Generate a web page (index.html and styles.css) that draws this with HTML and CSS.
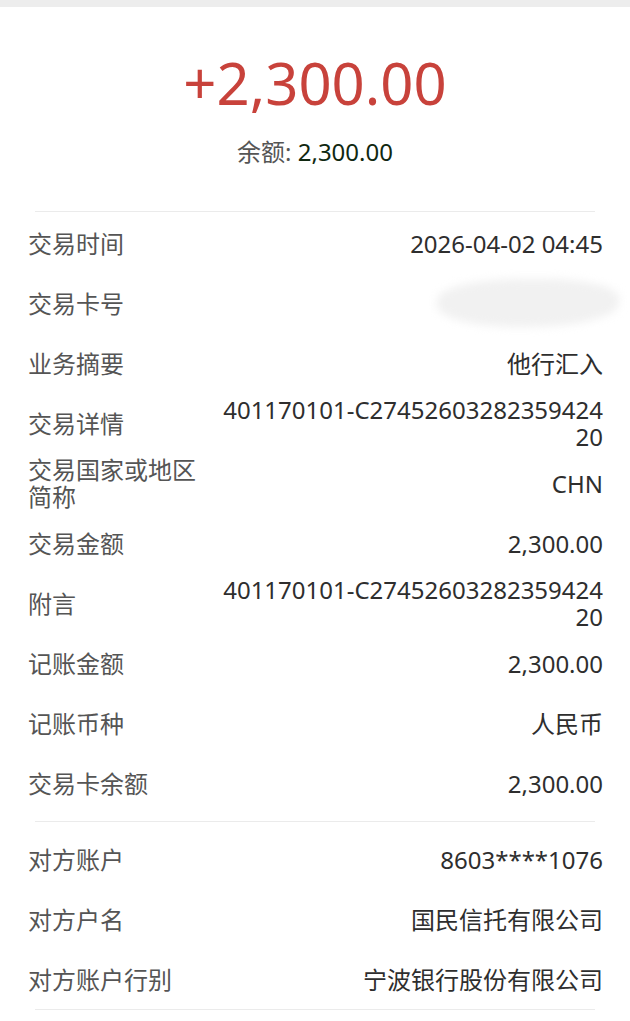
FILE: index.html
```html
<!DOCTYPE html>
<html lang="zh-CN">
<head>
    <meta charset="UTF-8">
    <title>交易详情</title>
    <link rel="stylesheet" href="styles.css">
</head>
<body>
<div class="topbar"></div>

<div class="summary">
    <div class="amount">+2,300.00</div>
    <div class="balance"><span class="balance_label">余额:</span> <span class="balance_num">2,300.00</span></div>
</div>
<div class="line"></div>

<div class="group group_first">
    <div class="row"><div class="label">交易时间</div><div class="value">2026-04-02 04:45</div></div>
    <div class="row"><div class="label">交易卡号</div><div class="value"><span class="mask"></span></div></div>
    <div class="row"><div class="label">业务摘要</div><div class="value">他行汇入</div></div>
    <div class="row"><div class="label">交易详情</div><div class="value">401170101-C2745260328235942420</div></div>
    <div class="row"><div class="label">交易国家或地区简称</div><div class="value">CHN</div></div>
    <div class="row"><div class="label">交易金额</div><div class="value">2,300.00</div></div>
    <div class="row"><div class="label">附言</div><div class="value">401170101-C2745260328235942420</div></div>
    <div class="row"><div class="label">记账金额</div><div class="value">2,300.00</div></div>
    <div class="row"><div class="label">记账币种</div><div class="value">人民币</div></div>
    <div class="row"><div class="label">交易卡余额</div><div class="value">2,300.00</div></div>
</div>
<div class="line"></div>

<div class="group group_second">
    <div class="row"><div class="label">对方账户</div><div class="value">8603****1076</div></div>
    <div class="row"><div class="label">对方户名</div><div class="value">国民信托有限公司</div></div>
    <div class="row"><div class="label">对方账户行别</div><div class="value">宁波银行股份有限公司</div></div>
</div>
<div class="line"></div>
</body>
</html>
```

FILE: styles.css
```css
*{margin: 0;padding: 0;box-sizing: border-box;}
body{
    background-color: #fff;
    font-family: "Noto Sans", "Noto Sans CJK SC", sans-serif;
    overflow: hidden;
}
.topbar{
    height: 7px;
    background-color: #ededed;
}
/*金额*/
.summary{
    padding: 41px 0 44px;
    text-align: center;
}
.amount{
    font-size: 58px;
    line-height: 70px;
    color: #c8423b;
}
.balance{
    margin-top: 19px;
    font-size: 24px;
    line-height: 30px;
}
.balance_label{
    color: #555;
}
.balance_num{
    color: #102810;
}
.line{
    height: 1px;
    margin: 0 35px;
    background-color: #ebebeb;
}
/*明细*/
.group_first{
    padding: 1px 0 8px;
}
.group_second{
    padding: 7px 0 0;
}
.row{
    display: flex;
    align-items: center;
    min-height: 60px;
    padding: 0 27px 0 28px;
    font-size: 24px;
    line-height: 27px;
}
.label{
    flex: 0 0 189px;
    color: #555;
}
.value{
    flex: 1;
    min-width: 0;
    text-align: right;
    word-break: break-all;
    color: #2e2e2e;
}
/*卡号遮挡*/
.mask{
    display: inline-block;
    width: 182px;
    height: 48px;
    margin-right: -16px;
    vertical-align: middle;
    border-radius: 45% 40% 50% 45%;
    background-color: #f1f1f1;
    filter: blur(4px);
}
```
